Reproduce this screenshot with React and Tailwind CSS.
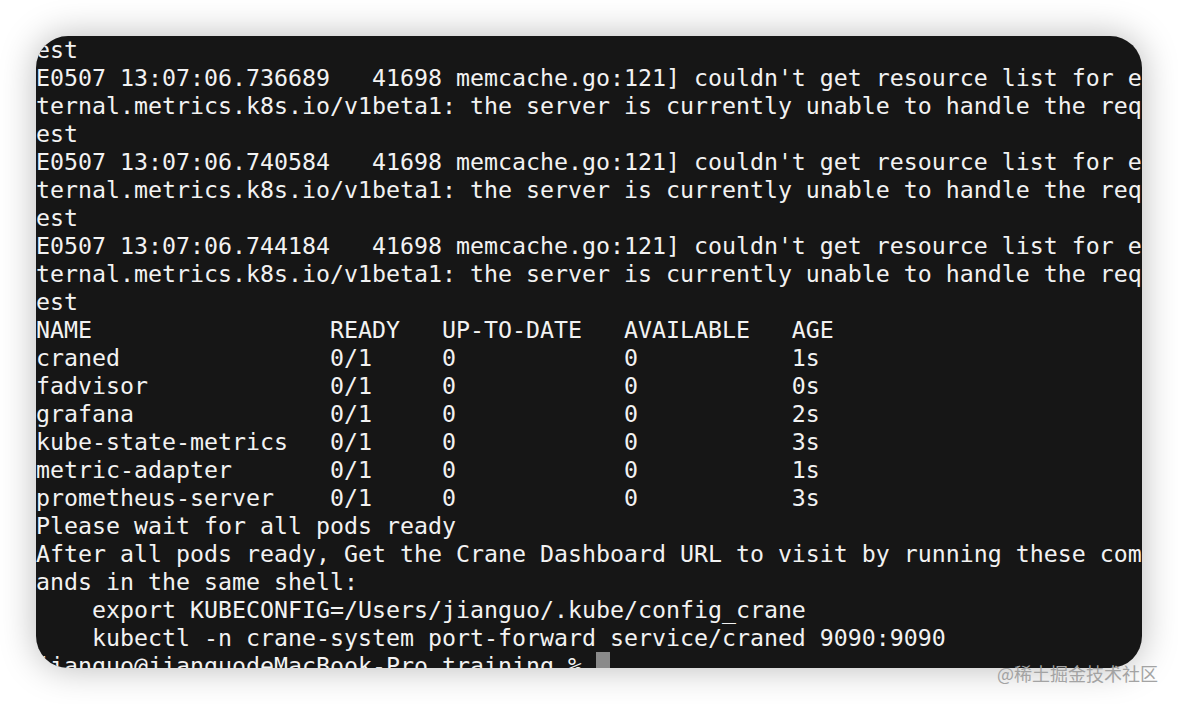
import React from 'react';

const pad = (cols) => cols.map(([text, width]) => (width ? text.padEnd(width) : text)).join('');

const logBlock = (ts) => [
  `E0507 13:07:06.${ts}   41698 memcache.go:121] couldn't get resource list for e`,
  'ternal.metrics.k8s.io/v1beta1: the server is currently unable to handle the req',
  'est',
];

const deployments = [
  ['craned', '1s'],
  ['fadvisor', '0s'],
  ['grafana', '2s'],
  ['kube-state-metrics', '3s'],
  ['metric-adapter', '1s'],
  ['prometheus-server', '3s'],
];

const lines = [
  'est',
  ...logBlock('736689'),
  ...logBlock('740584'),
  ...logBlock('744184'),
  pad([['NAME', 21], ['READY', 8], ['UP-TO-DATE', 13], ['AVAILABLE', 12], ['AGE']]),
  ...deployments.map(([name, age]) => pad([[name, 21], ['0/1', 8], ['0', 13], ['0', 12], [age]])),
  'Please wait for all pods ready',
  'After all pods ready, Get the Crane Dashboard URL to visit by running these comm',
  'ands in the same shell:',
  '    export KUBECONFIG=/Users/jianguo/.kube/config_crane',
  '    kubectl -n crane-system port-forward service/craned 9090:9090',
];

export default function App() {
  return (
    <div className="relative w-[1178px] h-[704px] bg-white p-[36px] overflow-hidden">
      <div
        className="w-[1106px] h-[632px] rounded-[32px] bg-[#161616] overflow-hidden shadow-[0_0_36px_rgba(0,0,0,0.28)] text-[#f2f2f2] text-[23.25px] leading-[28px] whitespace-pre"
        style={{ fontFamily: '"DejaVu Sans Mono", "Liberation Mono", monospace' }}
      >
        {lines.map((line, i) => (
          <div key={i} className="h-[28px]">{line}</div>
        ))}
        <div className="h-[28px] flex">
          <span>jianguo@jianguodeMacBook-Pro training % </span>
          <span className="w-[14px] h-[28px] bg-[#8a8a8a]" />
        </div>
      </div>
      <div
        className="absolute left-[997px] top-[661px] text-[18px] leading-[24px] text-[#a3a3a3]"
        style={{ fontFamily: '"Noto Sans CJK SC", "Noto Sans", sans-serif' }}
      >
        @稀土掘金技术社区
      </div>
    </div>
  );
}
